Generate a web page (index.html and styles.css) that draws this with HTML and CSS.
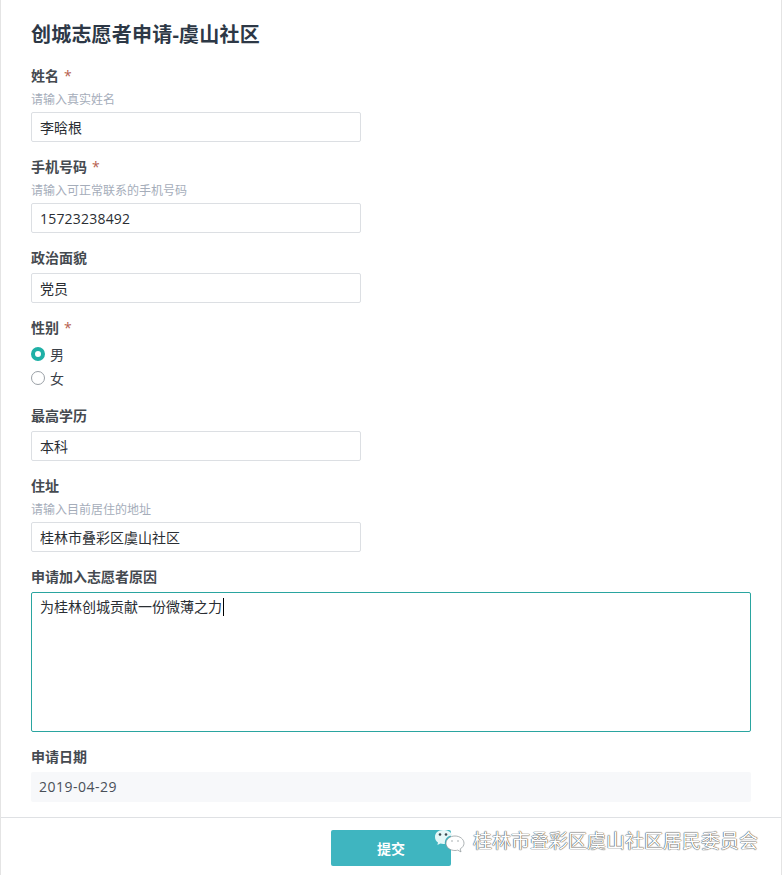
FILE: index.html
```html
<!DOCTYPE html>
<html lang="zh-CN">
<head>
<meta charset="utf-8">
<title>创城志愿者申请-虞山社区</title>
<link rel="stylesheet" href="styles.css">
</head>
<body>
<div class="page">
  <form class="form">
    <h1 class="title">创城志愿者申请-虞山社区</h1>
    <div class="field">
      <div class="label">姓名<span class="req">*</span></div>
      <div class="help">请输入真实姓名</div>
      <input class="input" type="text" value="李晗根">
    </div>
    <div class="field">
      <div class="label">手机号码<span class="req">*</span></div>
      <div class="help">请输入可正常联系的手机号码</div>
      <input class="input num" type="text" value="15723238492">
    </div>
    <div class="field">
      <div class="label spaced">政治面貌</div>
      <input class="input" type="text" value="党员">
    </div>
    <div class="field">
      <div class="label">性别<span class="req">*</span></div>
      <div class="radios">
        <div class="radio"><span class="dot on"></span>男</div>
        <div class="radio"><span class="dot"></span>女</div>
      </div>
    </div>
    <div class="field">
      <div class="label spaced">最高学历</div>
      <input class="input" type="text" value="本科">
    </div>
    <div class="field">
      <div class="label">住址</div>
      <div class="help">请输入目前居住的地址</div>
      <input class="input" type="text" value="桂林市叠彩区虞山社区">
    </div>
    <div class="field">
      <div class="label spaced">申请加入志愿者原因</div>
      <div class="textarea" role="textbox">为桂林创城贡献一份微薄之力<span class="caret"></span></div>
    </div>
    <div class="field">
      <div class="label spaced">申请日期</div>
      <div class="date">2019-04-29</div>
    </div>
  </form>
  <footer class="footer">
    <button class="submit" type="button">提交</button>
  </footer>
  <div class="watermark">
    <svg class="wechat" width="32" height="24" viewBox="0 0 32 24" aria-hidden="true">
      <path d="M9 1C4 1 1 4 1 8c0 2.400 1.200 4.200 3 5.400L3.400 16l3-1.500c1 .3 2 .4 3 .4h1.500C10.300 10 14 6.500 18.500 6.500 17.500 3 13.500 1 9 1z" fill="#e4f7f8"/>
      <circle cx="6" cy="5.500" r="1.300" fill="#3a4a50"/>
      <circle cx="12" cy="5.500" r="1.300" fill="#3a4a50"/>
      <path d="M21 7c-5 0-9 3.300-9 7.300s4 7.200 9 7.200c1 0 1.800-.1 2.600-.4l3.400 1.800-.8-3c2.300-1.300 3.800-3.400 3.800-5.600C30 10.300 26 7 21 7z" fill="#fff" stroke="#8a9295" stroke-width=".7"/>
      <circle cx="18" cy="12" r=".7" fill="#8a9295"/>
      <circle cx="24" cy="12" r=".7" fill="#8a9295"/>
    </svg>
    <span class="wm-text">桂林市叠彩区虞山社区居民委员会</span>
  </div>
</div>
</body>
</html>
```
FILE: styles.css
```css
* { box-sizing: border-box; }
html, body { margin: 0; padding: 0; background: #fff; }
body {
  font-family: "Open Sans", "Noto Sans CJK SC", sans-serif;
  color: #2f3640;
}
.page {
  position: relative;
  width: 782px;
  height: 875px;
  overflow: hidden;
  border-left: 1px solid #e4e4e4;
  border-right: 1px solid #e4e4e4;
}
.form { padding: 20px 30px 0; }
.title {
  margin: 0 0 16px;
  font-size: 20px;
  line-height: 30px;
  font-weight: 700;
  letter-spacing: .2px;
  color: #2d3846;
}
.field { margin-bottom: 15px; }
.label {
  font-size: 14px;
  line-height: 20px;
  font-weight: 700;
  color: #454a50;
}
.label.spaced { margin-bottom: 5px; }
.req { margin-left: 5px; color: #b5604f; font-weight: 400; }
.help {
  margin: 5px 0 3px;
  font-size: 12px;
  line-height: 18px;
  color: #a5adba;
}
.input {
  display: block;
  width: 330px;
  height: 30px;
  padding: 0 8px;
  border: 1px solid #dcdfe3;
  border-radius: 2px;
  outline: 0;
  background: #fff;
  font: 14px/28px "Open Sans", "Noto Sans CJK SC", sans-serif;
  color: #2a2e33;
}
.num { letter-spacing: .2px; }
.radios { margin-top: 4px; padding-bottom: 1px; }
.radio {
  display: flex;
  align-items: center;
  gap: 5px;
  height: 24px;
  font-size: 14px;
  color: #3a4048;
}
.dot {
  width: 14px;
  height: 14px;
  border: 1px solid #9aa0a6;
  border-radius: 50%;
  background: #fff;
}
.dot.on { border: 4px solid #1fb0a6; }
.textarea {
  width: 720px;
  height: 140px;
  padding: 3px 8px;
  border: 1px solid #2aa5a0;
  border-radius: 2px;
  font-size: 14px;
  line-height: 22px;
  color: #2a2e33;
}
.caret {
  display: inline-block;
  width: 1px;
  height: 18px;
  margin-left: 1px;
  vertical-align: -4px;
  background: #000;
}
.date {
  width: 720px;
  height: 30px;
  padding: 0 8px;
  border-radius: 2px;
  background: #f7f8fa;
  font-size: 14px;
  line-height: 30px;
  letter-spacing: .5px;
  color: #4a5058;
}
.footer {
  position: absolute;
  left: 0;
  right: 0;
  top: 817px;
  height: 58px;
  display: flex;
  justify-content: center;
  padding-top: 12px;
  border-top: 1px solid #dfe1e4;
}
.submit {
  width: 120px;
  height: 36px;
  border: 0;
  border-radius: 2px;
  background: #3fb5c0;
  color: #fff;
  font: 700 14px "Noto Sans CJK SC", sans-serif;
}
.watermark {
  position: absolute;
  left: 433px;
  top: 827px;
  display: flex;
  align-items: center;
  gap: 7px;
}
.wm-text {
  font-size: 19px;
  line-height: 28px;
  color: #fff;
  text-shadow: 0 0 1px #333, 0 0 1px #333;
}
```
